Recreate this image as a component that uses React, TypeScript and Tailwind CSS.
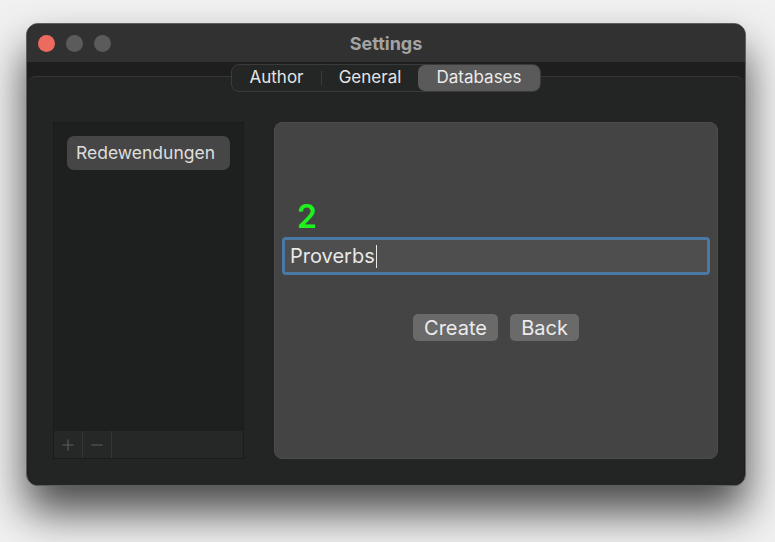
import { Plus, Minus } from 'lucide-react';

const font = { fontFamily: 'Inter, "Noto Sans", sans-serif' };

function TrafficLights() {
  return (
    <div className="flex items-center gap-[11px] pl-[11px]">
      <span className="w-[17px] h-[17px] rounded-full bg-[#ed6a5e]" />
      <span className="w-[17px] h-[17px] rounded-full bg-[#5b5b5b]" />
      <span className="w-[17px] h-[17px] rounded-full bg-[#5b5b5b]" />
    </div>
  );
}

function TabSwitcher() {
  const tabs = ['Author', 'General', 'Databases'];
  return (
    <div className="relative z-10 mx-auto -mt-[13px] flex h-[28px] w-[310px] items-stretch rounded-[8px] border border-[#3b3b3b] bg-[#242525] text-[17px] text-[#e4e4e4]">
      <div className="flex w-[89px] items-center justify-center">{tabs[0]}</div>
      <div className="my-[6px] w-px bg-[#3a3a3a]" />
      <div className="flex w-[96px] items-center justify-center">{tabs[1]}</div>
      <div className="flex flex-1 items-center justify-center rounded-[7px] bg-[#5a5a5a] text-[#ececec]">{tabs[2]}</div>
    </div>
  );
}

export default function App() {
  return (
    <div className="w-[775px] h-[542px] overflow-hidden bg-[#f1f1f1] pl-[26px] pt-[23px]" style={font}>
      <div className="flex h-[463px] w-[720px] flex-col overflow-hidden rounded-[12px] border border-[#5e5e5e] bg-[#1e1e1e] shadow-[0_26px_44px_rgba(0,0,0,0.7)]">
        {/* Title bar */}
        <div className="grid h-[38px] grid-cols-[1fr_auto_1fr] items-center bg-[#313131]">
          <TrafficLights />
          <div className="text-[18px] font-bold text-[#a3a3a3]">Settings</div>
          <div />
        </div>

        {/* Tab box */}
        <div className="mx-px mt-[14px] flex flex-1 flex-col rounded-t-[8px] border-t border-[#353535] bg-[#232424]">
          <TabSwitcher />

          <div className="flex flex-1 gap-[30px] pl-[25px] pr-[26px] pt-[30px] pb-[26px]">
            {/* Database list */}
            <div className="flex w-[191px] flex-col border border-[#1b1b1b] bg-[#1e1f1f]">
              <div className="flex-1 px-[13px] pt-[13px]">
                <div className="flex h-[34px] items-center rounded-[7px] bg-[#464646] px-[9px] text-[17.5px] text-[#dedede]">
                  Redewendungen
                </div>
              </div>
              <div className="flex h-[27px] items-stretch bg-[#262727]">
                <div className="flex w-[28px] items-center justify-center text-[#5c5c5c]">
                  <Plus size={18} strokeWidth={1.5} />
                </div>
                <div className="w-px bg-[#353535]" />
                <div className="flex w-[28px] items-center justify-center text-[#5c5c5c]">
                  <Minus size={18} strokeWidth={1.5} />
                </div>
                <div className="w-px bg-[#353535]" />
              </div>
            </div>

            {/* Detail panel */}
            <div className="flex flex-1 flex-col rounded-[8px] border border-[#4c4c4c] bg-[#444444] px-[7px]">
              <div className="mt-[74px] pl-[15px] text-[32px] font-semibold leading-[40px] text-[#1df21d]">2</div>
              <div className="flex h-[38px] items-center rounded-[4px] border-[3px] border-[#4b79a6] bg-[#4e4e4e] px-[5px] text-[20px] text-[#e8e8e8]">
                Proverbs
                <span className="ml-px h-[23px] w-px bg-[#e8e8e8]" />
              </div>
              <div className="mt-[39px] flex justify-center gap-[12px] text-[20px] text-[#ececec]">
                <div className="flex h-[27px] w-[85px] items-center justify-center rounded-[5px] bg-[#6a6a6a]">Create</div>
                <div className="flex h-[27px] w-[69px] items-center justify-center rounded-[5px] bg-[#6a6a6a]">Back</div>
              </div>
            </div>
          </div>
        </div>
      </div>
    </div>
  );
}
